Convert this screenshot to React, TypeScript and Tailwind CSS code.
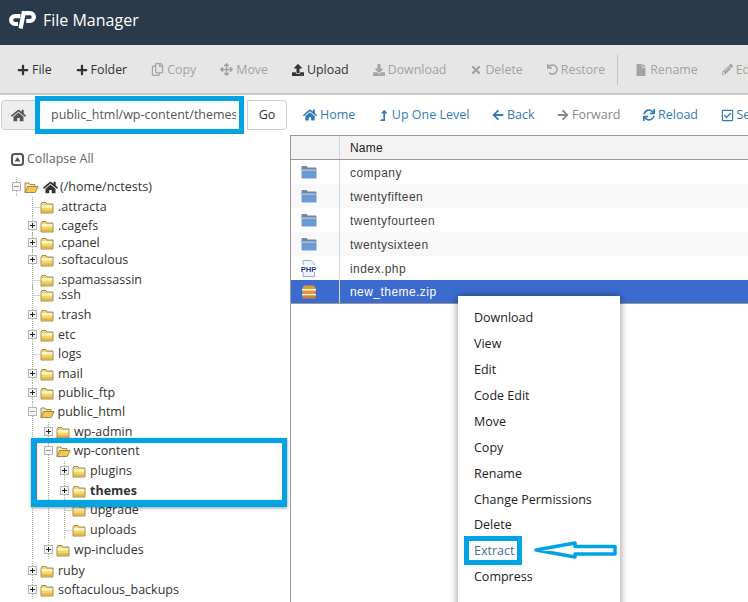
import {ReactNode} from 'react'
import {
  FaArrowLeft, FaArrowRight, FaArrowsAlt, FaDownload, FaFile, FaHome, FaLevelUpAlt, FaPencilAlt, FaPlus,
  FaRegCheckSquare, FaRegCopy, FaSync, FaTimes, FaUndo, FaUpload,
} from 'react-icons/fa'

const openSans = "font-['Open_Sans',sans-serif]"

const toolbarItems = [
  {label: 'File', icon: <FaPlus size={12}/>, on: true},
  {label: 'Folder', icon: <FaPlus size={12}/>, on: true},
  {label: 'Copy', icon: <FaRegCopy size={13}/>},
  {label: 'Move', icon: <FaArrowsAlt size={13}/>},
  {label: 'Upload', icon: <FaUpload size={12}/>, on: true},
  {label: 'Download', icon: <FaDownload size={12}/>},
  {label: 'Delete', icon: <FaTimes size={12}/>},
  {label: 'Restore', icon: <FaUndo size={11}/>},
]

const navItems = [
  {label: 'Home', icon: <FaHome size={14}/>},
  {label: 'Up One Level', icon: <FaLevelUpAlt size={11}/>},
  {label: 'Back', icon: <FaArrowLeft size={12}/>},
  {label: 'Forward', icon: <FaArrowRight size={12}/>, off: true},
  {label: 'Reload', icon: <FaSync size={12}/>},
  {label: 'Select All', icon: <FaRegCheckSquare size={13}/>},
]

interface TreeRow {
  name: string
  depth: number
  kind: 'plus' | 'minus' | 'leaf'
  shift?: string
  bold?: boolean
}

// The row spacing in this tree is uneven, hence the small margins.
const treeRows: TreeRow[] = [
  {name: '(/home/nctests)', depth: 0, kind: 'minus'},
  {name: '.attracta', depth: 1, kind: 'leaf'},
  {name: '.cagefs', depth: 1, kind: 'plus', shift: 'mt-[-1px]'},
  {name: '.cpanel', depth: 1, kind: 'plus', shift: 'mt-[-3px]'},
  {name: '.softaculous', depth: 1, kind: 'plus', shift: 'mt-[-3px]'},
  {name: '.spamassassin', depth: 1, kind: 'leaf'},
  {name: '.ssh', depth: 1, kind: 'leaf', shift: 'mt-[-5px]'},
  {name: '.trash', depth: 1, kind: 'plus'},
  {name: 'etc', depth: 1, kind: 'plus'},
  {name: 'logs', depth: 1, kind: 'leaf', shift: 'mt-[-1px]'},
  {name: 'mail', depth: 1, kind: 'plus'},
  {name: 'public_ftp', depth: 1, kind: 'plus', shift: 'mt-[-1px]'},
  {name: 'public_html', depth: 1, kind: 'minus', shift: 'mt-[-1px]'},
  {name: 'wp-admin', depth: 2, kind: 'plus'},
  {name: 'wp-content', depth: 2, kind: 'minus', shift: 'mt-[-1px]'},
  {name: 'plugins', depth: 3, kind: 'plus'},
  {name: 'themes', depth: 3, kind: 'plus', bold: true},
  {name: 'upgrade', depth: 3, kind: 'leaf', shift: 'mt-[-1px]'},
  {name: 'uploads', depth: 3, kind: 'leaf'},
  {name: 'wp-includes', depth: 2, kind: 'plus'},
  {name: 'ruby', depth: 1, kind: 'plus', shift: 'mt-[1px]'},
  {name: 'softaculous_backups', depth: 1, kind: 'plus', shift: 'mt-[-1px]'},
]

const files = [
  {name: 'company', type: 'folder'},
  {name: 'twentyfifteen', type: 'folder'},
  {name: 'twentyfourteen', type: 'folder'},
  {name: 'twentysixteen', type: 'folder'},
  {name: 'index.php', type: 'php'},
  {name: 'new_theme.zip', type: 'zip'},
]

const menuItems = ['Download', 'View', 'Edit', 'Code Edit', 'Move', 'Copy', 'Rename', 'Change Permissions', 'Delete', 'Extract', 'Compress']

function CpanelLogo() {
  return (
    <svg width="28" height="18" viewBox="0 0 28 18" fill="none" stroke="#fff" strokeWidth="4.2" className="shrink-0">
      <path d="M12.5 5.2H7a3.9 3.9 0 0 0 0 7.8h3"/>
      <path d="M12.6 17.5 15.6 2.2h6.4a3.9 3.9 0 0 1 0 7.8h-3.8"/>
    </svg>
  )
}

function CollapseIcon() {
  return (
    <svg width="13" height="13" viewBox="0 0 13 13" className="shrink-0">
      <rect x="1" y="1" width="11" height="11" rx="2.5" fill="#fff" stroke="#555" strokeWidth="2"/>
      <path d="M6.5 4 9.5 8.5h-6z" fill="#555"/>
    </svg>
  )
}

function ClosedFolder() {
  return (
    <svg width="14" height="13" viewBox="0 0 14 13" className="shrink-0">
      <path d="M1 3.5 2 1.5h4l1 1.5h6v9H1z" fill="#f5d36d" stroke="#85743a" strokeWidth="0.8"/>
      <rect x="1.6" y="4" width="10.8" height="2.6" fill="#fdf3c4"/>
      <rect x="1.6" y="9.4" width="10.8" height="2" fill="#e6b440"/>
    </svg>
  )
}

function OpenFolder() {
  return (
    <svg width="15" height="13" viewBox="0 0 15 13" className="shrink-0">
      <path d="M1 11.5V2h4l1 1.5h5v2" fill="#f7e6a8" stroke="#85743a" strokeWidth="0.8"/>
      <path d="M1 11.5 3.6 5.5h10.6l-3 6z" fill="#f2c650" stroke="#85743a" strokeWidth="0.8"/>
    </svg>
  )
}

function BlueFolder() {
  return (
    <svg width="16" height="14" viewBox="0 0 16 14">
      <path d="M0.5 2a1 1 0 0 1 1-1h4l1.5 1.5h7.5a1 1 0 0 1 1 1V5H0.5z" fill="#76879a"/>
      <path d="M0.5 4.5h15v8a1 1 0 0 1-1 1h-13a1 1 0 0 1-1-1z" fill="#6c9ad2"/>
      <rect x="0.5" y="4.5" width="15" height="1.4" fill="#a8c4e6"/>
    </svg>
  )
}

function PhpIcon() {
  return (
    <svg width="15" height="17" viewBox="0 0 15 17">
      <path d="M2 .5h8l3.5 3.5v12.5H2z" fill="#eef2fa" stroke="#8fa3c8" strokeWidth="0.9"/>
      <rect x="0" y="5" width="15" height="7" fill="#fff"/>
      <text x="7.5" y="11.5" textAnchor="middle" fontSize="7.6" fontWeight="700" fontFamily="Liberation Sans, sans-serif" fill="#1b3a96">PHP</text>
    </svg>
  )
}

function ZipIcon() {
  return (
    <svg width="16" height="14" viewBox="0 0 16 14">
      <path d="M3 .5h10l2 3.5H1z" fill="#d99a3b"/>
      <rect x="1" y="4" width="14" height="1.8" fill="#fff3d0"/>
      <rect x="1.5" y="5.8" width="13" height="3.2" fill="#e8952f"/>
      <rect x="1" y="9" width="14" height="1.6" fill="#fff3d0"/>
      <rect x="1.5" y="10.6" width="13" height="2.9" fill="#d8812a"/>
    </svg>
  )
}

// Connector cell of a tree row: dotted lines, plus the +/- box when the row can toggle.
function Toggle({kind}: {kind: TreeRow['kind']}) {
  return (
    <svg width="16" height="20" viewBox="0 0 16 20" className="shrink-0">
      <path d="M8.5 0V20" stroke="#a9a9a9" strokeDasharray="1 1"/>
      {kind === 'leaf' && <path d="M8.5 10.5H16" stroke="#a9a9a9" strokeDasharray="1 1"/>}
      {kind !== 'leaf' && (
        <g>
          <rect x="4.5" y="5.5" width="8" height="8" fill="#f4f4f4" stroke="#b5b5b5"/>
          <path d="M6 9.5h5" stroke={kind === 'plus' ? '#222' : '#999'}/>
          {kind === 'plus' && <path d="M8.5 7v5" stroke="#222"/>}
        </g>
      )}
    </svg>
  )
}

function Guide() {
  return (
    <svg width="16" height="20" viewBox="0 0 16 20" className="shrink-0">
      <path d="M8.5 0V20" stroke="#a9a9a9" strokeDasharray="1 1"/>
    </svg>
  )
}

function TreeLine({row}: {row: TreeRow}) {
  const guides: ReactNode[] = []
  for (let i = 0; i < row.depth; i++) {
    guides.push(i === 0 ? <div key={i} className="w-4 shrink-0"/> : <Guide key={i}/>)
  }
  const textGap = row.depth === 0 ? 'ml-[2px]' : row.kind === 'minus' ? 'ml-[2.5px]' : 'ml-1'
  return (
    <div className={`flex items-center h-5 ${row.shift ?? ''}`}>
      {guides}
      <Toggle kind={row.kind}/>
      <div className="flex items-center">
        {row.kind === 'minus' ? <OpenFolder/> : <ClosedFolder/>}
        {row.depth === 0 && <FaHome size={15} className="ml-1 text-[#333]"/>}
        <span className={`${textGap} whitespace-nowrap ${row.bold ? 'font-bold' : ''}`}>{row.name}</span>
      </div>
    </div>
  )
}

function FileRow({file, index}: {file: typeof files[number]; index: number}) {
  const selected = file.type === 'zip'
  const bg = selected ? 'bg-[#3c6bd0] text-white border-b border-[#999]' : index % 2 ? 'bg-[#f8f8f8] text-[#444]' : 'bg-white text-[#444]'
  return (
    <div className={`flex h-6 ${bg}`}>
      <div className="w-[49px] flex items-center pl-[10px] border-r border-[#d5d5d5]">
        {file.type === 'folder' && <BlueFolder/>}
        {file.type === 'php' && <PhpIcon/>}
        {file.type === 'zip' && <ZipIcon/>}
      </div>
      <div className="flex items-center pl-[10px] pt-px tracking-[0.45px]">{file.name}</div>
    </div>
  )
}

export default function App() {
  return (
    <div className={`relative h-[602px] w-[748px] overflow-hidden bg-white text-[12.5px] text-[#333] ${openSans}`}>
      <header className="h-[45px] bg-[#2b3a4b] flex items-center pl-2 pb-[6px] gap-[7px] text-white">
        <CpanelLogo/>
        <span className="text-[16px]">File Manager</span>
      </header>

      <div className="h-[50px] bg-[#e6e6e6] border-b-2 border-[#c9c9c9] flex items-center pl-[17px] pt-[2px] gap-6 whitespace-nowrap text-[12.4px]">
        {toolbarItems.map(item => (
          <div key={item.label} className={`flex items-center gap-[3px] shrink-0 ${item.on ? 'text-[#333]' : 'text-[#a3a3a3]'}`}>
            {item.icon}
            {item.label}
          </div>
        ))}
        <div className="flex items-center gap-[17px] -ml-3 shrink-0">
          <div className="w-px h-[30px] bg-[#c4c4c4]"/>
          <div className="flex items-center gap-[3px] text-[#a3a3a3]"><FaFile size={12}/>Rename</div>
        </div>
        <div className="flex items-center gap-[3px] shrink-0 text-[#a3a3a3]"><FaPencilAlt size={11}/>Edit</div>
      </div>

      <div className="h-[40px] flex items-center whitespace-nowrap">
        <div className="ml-px w-[35px] h-[30px] shrink-0 flex items-center justify-center bg-[#eee] border border-[#ccc] rounded-l text-[#555]">
          <FaHome size={15}/>
        </div>
        <div className="-ml-px w-[209px] h-[38px] border-[5px] border-[#00a3e4] bg-white flex items-center pl-[11px] pr-[3px] text-[#555] shrink-0">
          <div className="overflow-hidden">public_html/wp-content/themes</div>
        </div>
        <div className="ml-[3px] w-10 h-[30px] shrink-0 flex items-center justify-center border border-[#ccc] rounded-r">Go</div>
        <nav className="ml-4 flex items-center gap-[22.5px] text-[#337ab7]">
          {navItems.map(item => (
            <div key={item.label} className={`flex items-center gap-[3px] shrink-0 ${item.off ? 'text-[#888]' : ''}`}>
              {item.icon}
              {item.label}
            </div>
          ))}
        </nav>
      </div>

      <div className="flex h-[467px]">
        <aside className="relative w-[291px] shrink-0 pl-2 pt-[12px] border-r border-[#999]">
          <div className="flex items-center gap-[3px] pl-[3px] h-6 text-[#666]">
            <CollapseIcon/>
            Collapse All
          </div>
          <div className="mt-[6px]">
            {treeRows.map(row => <TreeLine key={row.name} row={row}/>)}
          </div>
          <div className="absolute left-[31px] top-[303px] w-[256px] h-[69px] border-[5px] border-b-[7px] border-[#00a3e4] shadow-[0_1px_3px_rgba(0,0,0,0.4),inset_1px_0_1px_rgba(0,0,0,0.6)]"/>
        </aside>

        <section className="flex-1 min-w-0 font-['Liberation_Sans',sans-serif] text-[12px]">
          <div className="h-[25px] flex bg-[#f3f3f3] border-y border-[#999] text-[#222]">
            <div className="w-[49px] border-r border-[#d5d5d5]"/>
            <div className="pl-[10px] flex items-center tracking-[0.2px]">Name</div>
          </div>
          {files.map((file, i) => <FileRow key={file.name} file={file} index={i}/>)}
        </section>
      </div>

      <div className="absolute left-[458px] top-[296px] w-[162px] h-[320px] bg-white shadow-[0_0_8px_rgba(0,0,0,0.45)] pt-[9px] text-[#222]">
        {menuItems.map(item => (
          item === 'Extract'
            ? <div key={item} className="relative h-[26px] pl-4 flex items-center text-[#4a6d93]">
                {item}
                <div className="absolute left-[6px] top-[-2px] w-[58px] h-[29px] border-[5px] border-[#00a3e4]"/>
              </div>
            : <div key={item} className={`${item === 'Delete' ? 'h-[25px]' : 'h-[26px]'} pl-4 flex items-center`}>{item}</div>
        ))}
      </div>

      <svg width="90" height="24" viewBox="0 0 90 24" fill="none" className="absolute left-[532px] top-[538px]">
        <path d="M4 12 43 5v3.5h40V16H43v3z" stroke="#00a3e4" strokeWidth="3.5" strokeLinejoin="round"/>
      </svg>
    </div>
  )
}
